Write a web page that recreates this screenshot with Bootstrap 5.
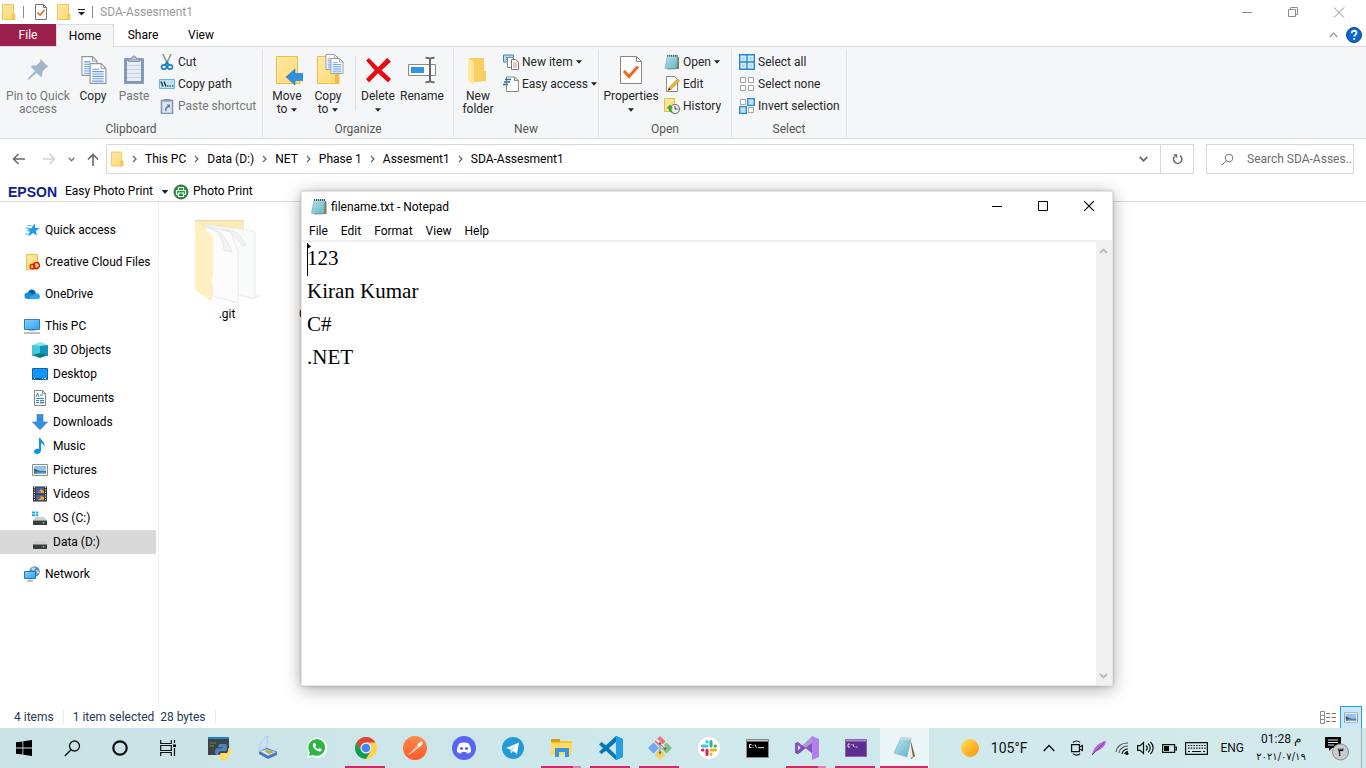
<!DOCTYPE html>
<html lang="en">
<head>
<meta charset="utf-8">
<meta name="viewport" content="width=device-width, initial-scale=1">
<title>SDA-Assesment1</title>
<link href="https://cdn.jsdelivr.net/npm/bootstrap@5.3.0/dist/css/bootstrap.min.css" rel="stylesheet">
<script src="https://cdn.jsdelivr.net/npm/bootstrap@5.3.0/dist/js/bootstrap.bundle.min.js" defer></script>
<style>
  :root { --line: #dadbdc; --ribbon: #f5f6f7; --wine: #9a1f4c; --pink: #cf2a64; }
  body { font-family: Roboto, "Open Sans", sans-serif; font-size: 12px; line-height: 13px; color: #000; background: #fff; }
  svg { display: block; flex: none; }
  button { border: 0; background: none; padding: 0; color: inherit; }
  a { color: inherit; text-decoration: none; }
  .titlebar { height: 24px; padding-left: 2px; gap: 7px; }
  .titlebar .sep { width: 1px; height: 12px; background: #8a8a8a; }
  .titlebar .quick { gap: 10px; padding-left: 4px; }
  .win-ctl { width: 46px; height: 20px; }
  .win-title { color: #999; }
  .tabs { height: 23px; border-bottom: 1px solid var(--line); }
  .tabs .tab-btn { height: 23px; width: 58px; }
  .tabs .file { background: var(--wine); color: #fff; height: 22px; width: 56px; }
  .tabs .home { border: 1px solid var(--line); border-bottom: 0; background: var(--ribbon); }
  .ribbon { background: var(--ribbon); border-bottom: 1px solid var(--line); height: 92px; color: #262626; }
  .group { border-right: 1px solid #e2e3e4; height: 88px; margin-top: 2px; display: flex; flex-direction: column; flex: none; }
  .group > .items { display: flex; flex: none; height: 73px; padding-left: 2px; }
  .group > .caption { text-align: center; color: #555; line-height: 14px; }
  .g-clipboard { width: 263px; }
  .g-organize { width: 191px; }
  .g-new { width: 145px; }
  .g-open { width: 133px; }
  .g-select { width: 115px; }
  .big { display: flex; flex-direction: column; align-items: center; padding-top: 5px; flex: none; line-height: 13px; white-space: nowrap; width: 44px; }
  .big.w-xl { width: 72px; }
  .big.w-lg { width: 60px; }
  .big.w-sm { width: 38px; }
  .big svg.pic { margin-bottom: 4px; }
  .big .ln { display: flex; align-items: center; gap: 4px; height: 13px; }
  .dim { color: #777; }
  .stack { display: flex; flex-direction: column; padding: 2px 0 0 3px; }
  .stack button { display: flex; align-items: center; gap: 3px; height: 22px; white-space: nowrap; }
  .v-sep { width: 1px; background: #dcdddf; margin: 7px 0 10px 8px; height: 55px; }
  .address { height: 39px; padding: 5px 12px 0 12px; }
  .nav-btns { width: 94px; height: 30px; }
  .addr-box { border: 1px solid #d9d9d9; height: 30px; }
  .crumbs { gap: 8px; padding-left: 4px; }
  .crumbs a, .crumbs svg { flex: none; }
  .refresh { width: 33px; height: 28px; border-left: 1px solid #d9d9d9; }
  .search-box { width: 148px; height: 30px; border: 1px solid #d9d9d9; margin-left: 12px; padding-left: 14px; gap: 13px; }
  .search-box input { border: 0; outline: 0; background: none; padding: 0; font-size: 12px; color: #6d6d6d; width: 106px; }
  .search-box input::placeholder { color: #6d6d6d; opacity: 1; }
  .epson-bar { height: 24px; border-bottom: 1px solid #d9d9d9; padding: 4px 0 0 8px; }
  .epson { font: bold 14px/16px "Liberation Sans", Arial, sans-serif; color: #10218b; width: 49px; }
  .nav-pane { width: 159px; border-right: 1px solid #f0f0f0; padding-top: 16px; }
  .nav-pane a { display: flex; align-items: center; gap: 5px; height: 24px; width: 156px; padding-left: 24px; white-space: nowrap; }
  .nav-pane .sub { padding-left: 32px; }
  .nav-pane .picked { background: #d9d9d9; }
  .file-area { padding: 17px 0 0 25px; }
  .tile { width: 86px; margin-right: 29px; }
  .tile svg { margin: 0 auto 3px; }
  .tile .thumb { height: 89px; }
  .statusbar { height: 22px; color: #1e395b; padding-left: 14px; gap: 9px; }
  .statusbar .bar { width: 1px; height: 14px; background: #ebebeb; }
  .view-on { width: 22px; height: 23px; background: #cce8ff; border: 1px solid #26a0da; }
  .taskbar { height: 40px; background: linear-gradient(90deg, #c9e2e6, #cfe8eb 50%, #d2eaec); color: #111; }
  .app { display: flex; align-items: center; justify-content: center; position: relative; width: 49px; height: 40px; flex: none; }
  .app.sys { width: 48px; }
  .app.run::after { content: ""; position: absolute; left: 4px; right: 5px; bottom: 0; height: 2px; background: var(--pink); }
  .app.multi::after { background: linear-gradient(90deg, var(--pink) 80%, #df86a8 80%); }
  .app.current { background: #ecf6f8; }
  .app.current::after { left: 0; right: 1px; }
  .sys-end { width: 2px; }
  .tray { gap: 8px; }
  .weather { gap: 12px; }
  .temp { font-size: 14px; }
  .clock { width: 58px; line-height: 18px; text-align: center; margin-right: 6px; }
  .clock .date { font-family: "DejaVu Sans", sans-serif; font-size: 10px; }
  .peek { width: 5px; height: 40px; border-left: 1px solid #9bb4b8; }
  .notepad { position: absolute; left: 301px; top: 191px; width: 812px; height: 495px; background: #fff; border: 1px solid #e4e4e4; box-shadow: 0 3px 16px rgba(0,0,0,.35), 0 0 3px rgba(0,0,0,.2); }
  .np-title { height: 29px; padding-left: 9px; }
  .np-title .np-name { padding: 2px 0 0 4px; }
  .np-title .ctl { width: 46px; height: 28px; }
  .np-menu { height: 21px; padding: 2px 0 0 7px; gap: 13px; border-bottom: 2px solid #f0f0f0; }
  .np-text { border: 0; outline: 0; resize: none; overflow: hidden; padding: 0 5px; font: 21px/33px "Liberation Serif", "Times New Roman", serif; color: #000; }
  .np-scroll { width: 16px; background: #f0f0f0; padding: 6px 1px 6px 0; }
  .caret { position: absolute; left: 5px; top: 51px; }
</style>
</head>
<body class="vh-100 d-flex flex-column overflow-hidden position-relative">

<!-- Shared icon sprite -->
<svg width="0" height="0" class="position-absolute" aria-hidden="true">
  <defs>
    <linearGradient id="gf" x1="0" y1="0" x2="1" y2="1"><stop offset="0" stop-color="#ffe9a2"/><stop offset="1" stop-color="#ffd970"/></linearGradient>
    <linearGradient id="gs" x1="0" y1="0" x2="1" y2="1"><stop offset="0" stop-color="#ffe45c"/><stop offset="1" stop-color="#ff8f00"/></linearGradient>
    <linearGradient id="gb" x1="0" y1="0" x2="1" y2="1"><stop offset="0" stop-color="#8bd0ff"/><stop offset="1" stop-color="#2ba2f5"/></linearGradient>
    <linearGradient id="gn" x1="0" y1="0" x2="1" y2="1"><stop offset="0" stop-color="#bfe6ef"/><stop offset="1" stop-color="#5fb4c8"/></linearGradient>
    <linearGradient id="gp" x1="0" y1="0" x2="0" y2="1"><stop offset="0" stop-color="#ff8a4a"/><stop offset="1" stop-color="#ff5a2a"/></linearGradient>
    <symbol id="folder" viewBox="0 0 14 16"><path d="M.5.5h11v10h1.500v5H.5z" fill="url(#gf)" stroke="#eec75c"/><path d="M11 10.500v5M11 10.500h2" stroke="#e3b33e" fill="none"/></symbol>
    <symbol id="tri" viewBox="0 0 5 3"><path d="M0 0h5L2.500 3z" fill="#222"/></symbol>
    <symbol id="page" viewBox="0 0 18 22"><path d="M.7.7h11.600l5 5v15.600H.7z" fill="#fff" stroke="#8f9499" stroke-width="1.200"/><path d="M12.300.7v5h5" fill="none" stroke="#8f9499"/><path d="M3 6.500h7M3 9h12M3 11.500h12M3 14h12M3 16.500h12M3 19h12" stroke="#5b9df0" stroke-width="1.200"/></symbol>
    <symbol id="note" viewBox="0 0 16 17"><path d="M14 3l1.500.5V16L3 16.500z" fill="#8d7a52"/><path d="M3 2h11l-1 13.500H.5z" fill="url(#gn)" stroke="#4f9db4" stroke-width=".5"/><path d="M2.500 5.500h10M2.200 8h10M1.900 10.500h10M1.600 13h10" stroke="#86c4d2" stroke-width=".6"/><path d="M3.500 1v1.800M5.500 1v1.800M7.500 1v1.800M9.500 1v1.800M11.500 1v1.800M13.300 1v1.800" stroke="#39444a"/></symbol>
    <symbol id="chev" viewBox="0 0 5 8"><path d="M1 1l3 3-3 3" fill="none" stroke="#6a6a6a" stroke-width="1.300"/></symbol>
    <symbol id="pict" viewBox="0 0 16 12"><path d="M.5.5h15v11H.5z" fill="#fff" stroke="#8b8f93"/><path d="M2 2h12v5H2z" fill="#8fc4f4"/><path d="M2 5l4 1.500 3 .5h5v3H2z" fill="#46768a"/><path d="M2 4.500l5 2.500H2z" fill="#2e5d49"/><path d="M5 8.500h9V10H2z" fill="#7cb1cf"/></symbol>
    <symbol id="drive" viewBox="0 0 14 8"><path d="M2.500 0h9L14 3.500H0z" fill="#cfcfcf"/><path d="M0 3.500h14V8H0z" fill="#3a3d40"/><circle cx="10.500" cy="5.700" r=".9" fill="#4be04b"/></symbol>
  </defs>
</svg>

<!-- Title bar -->
<header class="titlebar d-flex align-items-center flex-shrink-0">
  <svg width="14" height="16"><use href="#folder"/></svg>
  <span class="sep"></span>
  <div class="quick d-flex align-items-center">
    <button aria-label="Properties"><svg width="12" height="16" viewBox="0 0 12 16"><path d="M.5.5h8l3 3v12H.5z" fill="#fff" stroke="#777"/><path d="M8.500.5v3h3" fill="none" stroke="#777"/><path d="M2.500 8.500L5 11l4.500-5" fill="none" stroke="#f26522" stroke-width="1.700"/></svg></button>
    <button aria-label="New folder"><svg width="14" height="16"><use href="#folder"/></svg></button>
  </div>
  <button aria-label="Customize toolbar"><svg width="7" height="7" viewBox="0 0 7 7"><path d="M0 .5h7" stroke="#222"/><path d="M0 3h7L3.500 6.500z" fill="#222"/></svg></button>
  <span class="sep"></span>
  <span class="win-title">SDA-Assesment1</span>
  <div class="ms-auto d-flex align-items-center">
    <button class="win-ctl d-flex align-items-center justify-content-center" aria-label="Minimize"><svg width="12" height="10" viewBox="0 0 12 10"><path d="M1 5.500h10" stroke="#8c8c8c"/></svg></button>
    <button class="win-ctl d-flex align-items-center justify-content-center" aria-label="Restore"><svg width="12" height="12" viewBox="0 0 12 12"><path d="M1.500 3.500h7v7h-7zM3.500 3.500v-2h7v7h-2" fill="none" stroke="#8c8c8c"/></svg></button>
    <button class="win-ctl d-flex align-items-center justify-content-center me-1" aria-label="Close"><svg width="12" height="11" viewBox="0 0 12 11"><path d="M1 .5l10 10M11 .5l-10 10" stroke="#8c8c8c"/></svg></button>
  </div>
</header>

<nav class="tabs d-flex flex-shrink-0">
  <button class="tab-btn file">File</button><button class="tab-btn home">Home</button><button class="tab-btn">Share</button><button class="tab-btn">View</button>
  <div class="ms-auto d-flex align-items-center gap-2">
    <button aria-label="Collapse ribbon"><svg width="9" height="6" viewBox="0 0 9 6"><path d="M.7 5l3.800-4 3.800 4" fill="none" stroke="#999" stroke-width="1.300"/></svg></button>
    <button aria-label="Help" class="me-1"><svg width="16" height="16" viewBox="0 0 16 16"><circle cx="8" cy="8" r="7.500" fill="#0d68c9" stroke="#0a4c96"/><path d="M5.600 6.200C5.600 3 10.500 3 10.500 6c0 1.600-2.300 1.700-2.300 3.600M8.200 11v1.700" fill="none" stroke="#fff" stroke-width="1.800"/></svg></button>
  </div>
</nav>

<!-- Ribbon -->
<section class="ribbon d-flex flex-shrink-0">
  <div class="group g-clipboard">
    <div class="items">
      <button class="big w-xl dim"><svg class="pic" width="32" height="32" viewBox="0 0 32 32"><g transform="translate(5 5)"><path d="M13.500 0l8 8-2.500.7-3.800 4.200c.6 2.200 0 4-1.300 5.200L9.600 13.700 2 20.500.8 20.800l.2-1.500 7-7.300-4.200-4.300c1.400-1.300 3.200-1.700 5.300-1l4-4z" fill="#a3b5cb"/></g></svg><span class="ln">Pin to Quick</span><span class="ln">access</span></button>
      <button class="big w-sm"><svg class="pic" width="32" height="32" viewBox="0 0 32 32"><use href="#page" x="4" y="2" width="17" height="20"/><use href="#page" x="12" y="9" width="18" height="21"/></svg><span class="ln">Copy</span></button>
      <button class="big dim"><svg class="pic" width="32" height="32" viewBox="0 0 32 32"><path d="M6.500 4.500h19v25h-19z" fill="#8497bb" stroke="#8c9dbd"/><path d="M9 7h14v20H9z" fill="#e9edf5"/><path d="M9 11.500h14M9 15.500h14M9 19.500h14M9 23.500h14" stroke="#c6d0e3"/><path d="M10.500 7.500V5h3c0-3.800 5-3.800 5 0h3v2.500z" fill="#aebbd2" stroke="#8494b2"/></svg><span class="ln">Paste</span></button>
      <div class="stack">
        <button><svg width="16" height="16" viewBox="0 0 16 16"><path d="M4 0l5 11M12 0L7 11" stroke="#8d979f" stroke-width="1.600"/><g fill="none" stroke="#1583c6" stroke-width="1.700"><ellipse cx="5" cy="13" rx="2.500" ry="2.200"/><ellipse cx="11" cy="13" rx="2.500" ry="2.200"/><path d="M6 11l2-3 2 3"/></g></svg>Cut</button>
        <button><svg width="16" height="16" viewBox="0 0 16 16"><path d="M.5 3.500h15v9H.5z" fill="#bfe1f8" stroke="#6db1dd"/><path d="M2 5.500l2 5M5 5.500l2 5M8 10h1.500M10.500 10H12M13 10h1.500" stroke="#123" stroke-width="1.200"/></svg>Copy path</button>
        <button class="dim"><svg width="16" height="16" viewBox="0 0 16 16"><path d="M2.500 2.500h11v13h-11z" fill="#dfe5f0" stroke="#7f93b5" stroke-width="1.500"/><path d="M5 3V1.500h6V3z" fill="#9aaac6" stroke="#7f93b5"/><path d="M6 13c-.5-3 1-4.500 3-5L7.500 6.500H11v4L10 9C8.500 9.500 7 10.500 7.500 13z" fill="#60779f"/></svg>Paste shortcut</button>
      </div>
    </div>
    <div class="caption">Clipboard</div>
  </div>
  <div class="group g-organize">
    <div class="items">
      <button class="big"><svg class="pic" width="32" height="32" viewBox="0 0 32 32"><path d="M5.500 2.500h21v17H29v10H5.500z" fill="url(#gf)" stroke="#e8bd4d"/><path d="M15 23l9-8v4.500h8v7h-8V31z" fill="#2e8fe0" stroke="#2277bf" stroke-width=".6"/></svg><span class="ln">Move</span><span class="ln">to<svg width="6" height="4"><use href="#tri"/></svg></span></button>
      <button class="big w-sm"><svg class="pic" width="32" height="32" viewBox="0 0 32 32"><path d="M5.500 2.500h20v17H27v10H5.500z" fill="url(#gf)" stroke="#e8bd4d"/><path d="M23 20h3.500v9.500H23z" fill="#f0bd45"/><use href="#page" x="13" y="0" width="14" height="16"/><use href="#page" x="18" y="4" width="14" height="16"/></svg><span class="ln">Copy</span><span class="ln">to<svg width="6" height="4"><use href="#tri"/></svg></span></button>
      <span class="v-sep"></span>
      <button class="big"><svg class="pic" width="32" height="32" viewBox="0 0 32 32"><path d="M4 6.500L7 4l9 9.300L25 4l4 3.500-9.300 8.700L29 25l-3 3.500-10-9.300-9 9.300L4 25l8.700-8.800z" fill="#e60b12"/></svg><span class="ln">Delete</span><span class="ln"><svg width="6" height="4"><use href="#tri"/></svg></span></button>
      <button class="big"><svg class="pic" width="32" height="32" viewBox="0 0 32 32"><path d="M2.500 10.500h27v11h-27z" fill="#fff" stroke="#8a8a8a"/><path d="M5 13h13v6H5z" fill="#2f94ea"/><path d="M19.500 3.800c3 0 4.500 0 4.500 2.200v20c0 2.200-1.500 2.200-4.500 2.200M28.500 3.800C25.500 3.800 24 3.800 24 6v20c0 2.200 1.500 2.200 4.500 2.200" fill="none" stroke="#666" stroke-width="2"/></svg><span class="ln">Rename</span></button>
    </div>
    <div class="caption">Organize</div>
  </div>
  <div class="group g-new">
    <div class="items">
      <button class="big"><svg class="pic" width="32" height="32" viewBox="0 0 32 32"><path d="M6 4h16v14l2 9-12 1z" fill="#f8ce63"/><path d="M6 4l6 4v23l-6-4z" fill="#ffe79f"/><path d="M21 17h3v10h-3z" fill="#f4cc62"/></svg><span class="ln">New</span><span class="ln">folder</span></button>
      <div class="stack">
        <button><svg width="16" height="16" viewBox="0 0 16 16"><path d="M.5 1h10v7H.5z" fill="#b5dcf5" stroke="#3c88b4"/><path d="M3 3.500h5M3 5.500h3" stroke="#3c88b4"/><path d="M4.500 3.500h6v10h-6z" fill="#fff" stroke="#888"/><path d="M8.500 5.500h4l3 2.500v7.500h-7z" fill="#fff" stroke="#777"/><path d="M10 9h4M10 11h4M10 13h4" stroke="#c99"/></svg>New item<svg width="6" height="4"><use href="#tri"/></svg></button>
        <button><svg width="16" height="16" viewBox="0 0 16 16"><path d="M3.500 1h8l4 3.500v11h-12z" fill="#fff" stroke="#888"/><path d="M11.500 1v3.500h4" fill="none" stroke="#888"/><path d="M2 3.500h6M1 6h6M0 8.500h5" stroke="#2a6f9c" stroke-width="1.300"/></svg>Easy access<svg width="6" height="4"><use href="#tri"/></svg></button>
      </div>
    </div>
    <div class="caption">New</div>
  </div>
  <div class="group g-open">
    <div class="items">
      <button class="big w-lg"><svg class="pic" width="32" height="32" viewBox="0 0 32 32"><path d="M5.500 2.500h16l5 5v22h-21z" fill="#fff" stroke="#858585"/><path d="M21.500 2.500v5h5" fill="none" stroke="#858585"/><path d="M9 17l5 5.500 9-10" fill="none" stroke="#f26522" stroke-width="3"/></svg><span class="ln">Properties</span><span class="ln"><svg width="6" height="4"><use href="#tri"/></svg></span></button>
      <div class="stack">
        <button><svg width="16" height="16"><use href="#note"/></svg>Open<svg width="6" height="4"><use href="#tri"/></svg></button>
        <button><svg width="16" height="16" viewBox="0 0 16 16"><path d="M2.500.5h8l3 3v12h-11z" fill="#fff" stroke="#888"/><path d="M4 14.500l1.200-3.300L13.500 3l2 2-8.300 8.300z" fill="#f2b63d" stroke="#b97c22" stroke-width=".6"/><path d="M4 14.500l1-2.800 1.800 1.800z" fill="#333"/></svg>Edit</button>
        <button><svg width="16" height="16" viewBox="0 0 16 16"><path d="M.5.5h10v13H.5z" fill="url(#gf)" stroke="#e3bb54"/><circle cx="11" cy="11" r="4.500" fill="#eee" stroke="#777" stroke-width="1.200"/><path d="M11 8v3h2.500" fill="none" stroke="#444"/><path d="M2.500 10.500l3.500-4 3 4H7.300c0 2 1 3.500 2.700 4-3 .8-5.500-1.500-5.500-4z" fill="#2ea836"/></svg>History</button>
      </div>
    </div>
    <div class="caption">Open</div>
  </div>
  <div class="group g-select">
    <div class="items ps-1">
      <div class="stack">
        <button><svg width="16" height="16" viewBox="0 0 16 16"><path d="M.7.7h14.600v14.600H.7zM8 .7v14.600M.7 8h14.600" fill="#d5ecfc" stroke="#2687d4" stroke-width="1.400"/><path d="M3 3h2.700v2.700H3zM10.300 3H13v2.700h-2.700zM3 10.300h2.700V13H3zM10.300 10.300H13V13h-2.700z" fill="#a9d8f8"/></svg>Select all</button>
        <button><svg width="16" height="16" viewBox="0 0 16 16"><path d="M1.500 1.500h5v5h-5zM9.500 1.500h5v5h-5zM1.500 9.500h5v5h-5zM9.500 9.500h5v5h-5z" fill="#fff" stroke="#a5a5a5"/></svg>Select none</button>
        <button><svg width="16" height="16" viewBox="0 0 16 16"><path d="M1.500 1.500h5v5h-5zM9.500 9.500h5v5h-5z" fill="#fff" stroke="#a5a5a5"/><path d="M8.700.7h6.600v6.600H8.700zM.7 8.700h6.600v6.600H.7z" fill="#b9e0fb" stroke="#2687d4" stroke-width="1.300"/></svg>Invert selection</button>
      </div>
    </div>
    <div class="caption">Select</div>
  </div>
</section>

<!-- Address row -->
<section class="address d-flex flex-shrink-0">
  <div class="nav-btns d-flex align-items-center">
    <button aria-label="Back"><svg width="14" height="12" viewBox="0 0 14 12"><path d="M13 6H2M6.500 1L1.500 6l5 5" fill="none" stroke="#666" stroke-width="1.500"/></svg></button>
    <button aria-label="Forward" class="ms-3"><svg width="14" height="12" viewBox="0 0 14 12"><path d="M1 6h11M7.500 1l5 5-5 5" fill="none" stroke="#d2d2d2" stroke-width="1.500"/></svg></button>
    <button aria-label="Recent" class="ms-2 ps-1"><svg width="7" height="5" viewBox="0 0 7 5"><path d="M.7.8l2.800 3 2.800-3" fill="none" stroke="#777" stroke-width="1.300"/></svg></button>
    <button aria-label="Up" class="ms-2 ps-1"><svg width="12" height="13" viewBox="0 0 12 13"><path d="M6 13V2M1 6.500l5-5 5 5" fill="none" stroke="#666" stroke-width="1.600"/></svg></button>
  </div>
  <div class="addr-box d-flex align-items-center flex-grow-1">
    <div class="crumbs d-flex align-items-center flex-grow-1">
      <svg width="13" height="16"><use href="#folder"/></svg>
      <svg width="5" height="8"><use href="#chev"/></svg><a href="#">This PC</a>
      <svg width="5" height="8"><use href="#chev"/></svg><a href="#">Data (D:)</a>
      <svg width="5" height="8"><use href="#chev"/></svg><a href="#">NET</a>
      <svg width="5" height="8"><use href="#chev"/></svg><a href="#">Phase 1</a>
      <svg width="5" height="8"><use href="#chev"/></svg><a href="#">Assesment1</a>
      <svg width="5" height="8"><use href="#chev"/></svg><a href="#">SDA-Assesment1</a>
    </div>
    <button class="px-2 me-1" aria-label="Previous locations"><svg width="9" height="6" viewBox="0 0 9 6"><path d="M.7.8l3.800 4 3.800-4" fill="none" stroke="#666" stroke-width="1.700"/></svg></button>
    <button class="refresh d-flex align-items-center justify-content-center" aria-label="Refresh"><svg width="11" height="12" viewBox="0 0 11 12"><path d="M8 2.700A4.200 4.200 0 1 1 2.500 3.500" fill="none" stroke="#666" stroke-width="1.500"/><path d="M1 1.300h4.200v4z" fill="#666"/></svg></button>
  </div>
  <label class="search-box d-flex align-items-center">
    <svg width="13" height="13" viewBox="0 0 13 13"><circle cx="8" cy="5" r="3.800" fill="none" stroke="#777"/><path d="M5.300 7.700L.8 12.200" stroke="#777"/></svg>
    <input type="text" placeholder="Search SDA-Asses..." aria-label="Search">
  </label>
</section>

<section class="epson-bar d-flex align-items-center flex-shrink-0">
  <span class="epson">EPSON</span>
  <button class="ms-2 d-flex align-items-center gap-2">Easy Photo Print<svg width="8" height="4"><use href="#tri" width="8" height="4"/></svg></button>
  <button class="ms-1 d-flex align-items-center gap-1"><svg width="16" height="16" viewBox="0 0 16 16"><circle cx="8" cy="8" r="7" fill="#1c9a38" stroke="#4b5a4f"/><path d="M5.500 6.500v-3h5v3M5.500 10.500h-2v-4h9v4h-2M5.500 9h5v3.500h-5z" fill="none" stroke="#fff" stroke-width="1.100"/></svg>Photo Print</button>
</section>

<!-- Explorer body -->
<main class="d-flex flex-grow-1 overflow-hidden">
  <nav class="nav-pane flex-shrink-0">
    <a href="#" class="mb-2"><svg width="16" height="16" viewBox="0 0 16 16"><path d="M10.500 1.500l.7 4.300 4.500.5-4 2.700 1.500 4.700L9 11l-4.800 3.500 1.600-5L3 6.500l4.300-.3z" fill="#1f9be8"/><path d="M3.500 3.500h4M1.500 6h4M2.500 9h3M1 12h4" stroke="#54b6f2"/></svg>Quick access</a>
    <a href="#" class="mb-2"><svg width="16" height="16" viewBox="0 0 16 16"><path d="M2.500.5h11v15h-11z" fill="url(#gf)" stroke="#eebf4e"/><g fill="none" stroke="#da1f16" stroke-width="1.500"><circle cx="8.500" cy="12.500" r="2.300"/><circle cx="12.500" cy="11.500" r="2.900"/></g></svg>Creative Cloud Files</a>
    <a href="#" class="mb-2"><svg width="16" height="16" viewBox="0 0 16 16"><path d="M4 7c.3-4.200 6.300-5 8 0l-3 3z" fill="#0364b8"/><path d="M3.500 13A3.200 3.200 0 0 1 4 6.500c2 0 3 1 5 2.500L5 13z" fill="#1490df"/><path d="M4 13l6-5c3-2 6 .3 6 2.700 0 1.300-1 2.300-2.300 2.300z" fill="#28a8ea"/></svg>OneDrive</a>
    <a href="#"><svg width="16" height="16" viewBox="0 0 16 16"><path d="M.5 1.500h15v10H.5z" fill="url(#gb)" stroke="#2e7fae"/><path d="M5 12.500h6" stroke="#9fb6c3"/><path d="M0 15h16" stroke="#8da0ae" stroke-width="1.300"/></svg>This PC</a>
    <a href="#" class="sub"><svg width="16" height="16" viewBox="0 0 16 16"><path d="M0 3l8-3 8 3-8 2z" fill="#8fe3ea"/><path d="M0 3l8 1v8l-8 2z" fill="#45c9d8"/><path d="M16 3L8 4v8l8 2z" fill="#1096bd"/><path d="M0 13l8-2 8 2-8 3z" fill="#087b88"/></svg>3D Objects</a>
    <a href="#" class="sub"><svg width="16" height="16" viewBox="0 0 16 16"><path d="M.5 2.500h15v11H.5z" fill="#1296f5" stroke="#0c64a9"/><path d="M1 12.500h14" stroke="#0b4f88"/><path d="M2 12.500h1M10 12.500h1M12 12.500h2" stroke="#fff"/></svg>Desktop</a>
    <a href="#" class="sub"><svg width="16" height="16" viewBox="0 0 16 16"><path d="M2.500.5h8l3 3v12h-11z" fill="#fff" stroke="#888"/><path d="M10.500.5v3h3" fill="none" stroke="#888"/><path d="M4 7l1.500-4L7 7M8 5h3M4 8.500h8M4 10.500h3M4 12.500h3M8 10.500h4" fill="none" stroke="#3984c6"/><path d="M8 12.500h4" stroke="#57767c" stroke-width="1.500"/></svg>Documents</a>
    <a href="#" class="sub"><svg width="16" height="16" viewBox="0 0 16 16"><path d="M5 .5h6V8h4.500L8 15.700.5 8H5z" fill="#338fe0" stroke="#2a78c0" stroke-width=".6"/></svg>Downloads</a>
    <a href="#" class="sub"><svg width="16" height="16" viewBox="0 0 16 16"><path d="M7 0h1.500c.5 3 5 4 4 8.500-.5-2-2-3-3.500-3.300V12c0 2-1.500 4-4 4S2 14.500 2 13.500C2 11.500 5 10 7 11z" fill="#0a94ee"/></svg>Music</a>
    <a href="#" class="sub"><svg width="16" height="12"><use href="#pict"/></svg>Pictures</a>
    <a href="#" class="sub"><svg width="16" height="16" viewBox="0 0 16 16"><path d="M1 .5h14v15H1z" fill="#2b2b2b"/><path d="M4 1.500h8v6H4zM4 8.500h8v6H4z" fill="#3f62a9"/><path d="M6 7l3-4 3 2v2zM6 14l3-4 3 1v3z" fill="#e3a62c"/><path d="M7 6h2M6 12h3" stroke="#cf3f2e"/><path d="M2.500 1v14M13.500 1v14" stroke="#e5e5e5" stroke-width="1.200" stroke-dasharray="1.200 1.200"/></svg>Videos</a>
    <a href="#" class="sub"><svg width="16" height="16" viewBox="0 0 16 16"><path d="M0 1.500h3v2H0zM3.700 1.500h2.600v2H3.700zM0 4.200h3v2H0zM3.700 4.200h2.600v2H3.700z" fill="#1ca9e6"/><use href="#drive" x="1" y="7" width="14" height="8"/></svg>OS (C:)</a>
    <a href="#" class="sub picked mb-2"><svg width="16" height="16" viewBox="0 0 16 16"><use href="#drive" x="1" y="7" width="14" height="8"/></svg>Data (D:)</a>
    <a href="#"><svg width="16" height="16" viewBox="0 0 16 16"><circle cx="10.500" cy="5.500" r="5.300" fill="#5c93b4"/><path d="M7 3c2-2 3-2 4-1s-1 2-2 3zM12 4c2 0 3 1 3 3l-2 1z" fill="#b3dbe6"/><path d="M.5 5.500h11v7H.5z" fill="url(#gb)" stroke="#2578b2"/><path d="M6 13v1.500M3 15h6" stroke="#8094a0"/></svg>Network</a>
  </nav>
  <div class="file-area d-flex">
    <div class="tile text-center">
      <svg width="68" height="86" viewBox="0 0 68 86"><path d="M50 79l17-3-5 4z" fill="#ebebeb"/><path d="M2 2h49v30L2 68z" fill="#fbe9b8"/><path d="M2 1.500h49" stroke="#eddcae"/><path d="M13 6l41 5 8 2v66l-20-3z" fill="#f9fafa" stroke="#ececec"/><path d="M29 10c6 1 14 7 20 17l4-1c-4-8-9-13-15-15z" fill="#f0f1f1" stroke="#e3e3e3" stroke-width=".7"/><path d="M12 7l26 6 7 19v52l-25-7z" fill="#fcfcfc" stroke="#e8e8e8"/><path d="M14 8c10 3 16 8 17 23l8 2c-3-9-8-17-14-21z" fill="#f2f3f3" stroke="#e0e0e0" stroke-width=".7"/><path d="M2 2.500l16 13 2 3v39l-1 2v23L2 71z" fill="#ffefc3"/></svg>
      .git
    </div>
    <div class="tile"><div class="thumb"></div>C</div>
  </div>
</main>

<footer class="statusbar d-flex align-items-center flex-shrink-0">
  <span>4 items</span><span class="bar"></span><span>1 item selected&nbsp; 28 bytes</span><span class="bar"></span>
  <div class="ms-auto d-flex align-items-center me-1">
    <button aria-label="Details view" class="me-1"><svg width="16" height="13" viewBox="0 0 16 13"><path d="M.5.5h4v12h-4zM.5 4.500h4M.5 8.500h4" fill="#fff" stroke="#8b8b8b"/><path d="M6 2.500h4M11.500 2.500H16M6 6.500h4M11.500 6.500H16M6 10.500h4M11.500 10.500H16" stroke="#777"/></svg></button>
    <button aria-label="Large icons view" class="view-on d-flex align-items-center justify-content-center"><svg width="14" height="11" viewBox="0 0 16 12"><use href="#pict"/></svg></button>
  </div>
</footer>

<!-- Taskbar -->
<footer class="taskbar d-flex align-items-center flex-shrink-0">
  <button class="app sys" aria-label="Start"><svg width="16" height="16" viewBox="0 0 16 16"><path d="M0 2.300l6.500-.9v6.200H0zM7.300 1.300L16 0v7.600H7.300zM0 8.400h6.500v6.200L0 13.700zM7.300 8.400H16V16l-8.700-1.200z"/></svg></button>
  <button class="app sys" aria-label="Search"><svg width="17" height="17" viewBox="0 0 17 17"><circle cx="10.500" cy="6" r="5" fill="none" stroke="#111" stroke-width="1.300"/><path d="M7 9.700L.8 16" stroke="#111" stroke-width="1.300"/></svg></button>
  <button class="app sys" aria-label="Cortana"><svg width="16" height="16" viewBox="0 0 16 16"><circle cx="8" cy="8" r="6.700" fill="none" stroke="#111" stroke-width="2.200"/></svg></button>
  <button class="app sys" aria-label="Task view"><svg width="17" height="16" viewBox="0 0 17 16"><path d="M.7 0v3.500h10.600V0M.7 16v-3.500h10.600V16M.7 5.500h10.600v5H.7zM14.500 0v3M14.500 8v8" fill="none" stroke="#111" stroke-width="1.200"/><path d="M13 4.500h3v2.500h-3z"/></svg></button>
  <span class="sys-end"></span>
  <button class="app" aria-label="Python"><svg width="24" height="24" viewBox="0 0 24 24"><path d="M1 1h21v18H1z" fill="#3e4346"/><path d="M1 1h21v2H1z" fill="#1684d4"/><path d="M3 7h6M3 10h4" stroke="#4f9653"/><path d="M13 8h5.500c1 0 1.500.8 1.500 1.800v3.400c0 1.200-.8 2-2 2h-4.500c-1.200 0-2 .8-2 2V19H10c-1.300 0-2-1.500-2-3.500s.8-3.300 2-3.300h6v-.8h-4.500V9.800C11.500 8.800 12 8 13 8z" fill="#4a86bd"/><path d="M19 24h-4.500c-1 0-1.800-.7-1.800-1.700v-3.300c0-1.200.8-2 2-2h4.100c1.300 0 2.200-.9 2.200-2.100V12.500h.7c1.500 0 2.300 1.400 2.300 3.500s-.8 3.500-2 3.500h-5.500v.8h4.300v2c0 1-.8 1.700-1.800 1.700z" fill="#ffdc56"/></svg></button>
  <button class="app" aria-label="Scanner"><svg width="22" height="24" viewBox="0 0 22 24"><path d="M2 15l8-3 10 4v3l-9 4-9-5z" fill="#4d74c6"/><path d="M2 15l8-2 10 3-9 4z" fill="#d9e9f5" stroke="#4b79c4" stroke-width=".7"/><path d="M7 15l4-1 6 2-5 2z" fill="#b9ae3c"/><path d="M11 0L9.500 11 2 15.500C2 9 6 2 11 0z" fill="#cfdff5" stroke="#a9c2e6" stroke-width=".7"/></svg></button>
  <button class="app" aria-label="WhatsApp"><svg width="22" height="22" viewBox="0 0 22 22"><path d="M1 21l1.500-5.500A10 10 0 1 1 6.500 19.500z" fill="#fff"/><path d="M3 19l1-3.500A8.400 8.400 0 1 1 7 18z" fill="#2cb742"/><path d="M8 6c-3 2 0 5.500 2 7 2 1.500 4.500 2 5.500.5.700-1.200-.3-1.700-2-2.500l-1.300 1.300C10.500 11.500 9.700 10.500 9.200 9.500l1-1.200C9.700 6.500 9 5.500 8 6z" fill="#fff"/></svg></button>
  <button class="app run" aria-label="Chrome"><svg width="22" height="22" viewBox="0 0 22 22"><circle cx="11" cy="11" r="11" fill="#ffd149"/><path d="M1.500 5.500A11 11 0 0 1 20.500 5.500H11L6.200 13.700z" fill="#db4437"/><path d="M1.500 5.500A11 11 0 0 0 11 22l4.800-8.300H6.200z" fill="#0f9d58"/><circle cx="11" cy="11" r="5.500" fill="#f1f1f1"/><circle cx="11" cy="11" r="4.300" fill="#4285f4"/></svg></button>
  <button class="app" aria-label="Postman"><svg width="24" height="24" viewBox="0 0 24 24"><circle cx="12" cy="12" r="12" fill="url(#gp)"/><path d="M5 18.500l9-8.500 1.500 1.500-7.500 6zM14 9.500C16 6 18.500 4.500 19.500 6s-1 4-4 5.500z" fill="#fff"/><path d="M7 17l8-7" stroke="#ff743c" stroke-width=".8"/></svg></button>
  <button class="app" aria-label="Discord"><svg width="24" height="24" viewBox="0 0 24 24"><circle cx="12" cy="12" r="12" fill="#5865f2"/><path d="M8 7c2-.7 6-.7 8 0 2 2 3.500 6 3 9-2 1.500-3 1.500-4 1.500l-.8-1.500H9.800L9 17.500c-1 0-2 0-4-1.500-.5-3 1-7 3-9z" fill="#fff"/><circle cx="9.500" cy="12.500" r="1.600" fill="#5865f2"/><circle cx="14.500" cy="12.500" r="1.600" fill="#5865f2"/></svg></button>
  <button class="app" aria-label="Telegram"><svg width="22" height="22" viewBox="0 0 22 22"><circle cx="11" cy="11" r="11" fill="#249bd7"/><path d="M4 11L17 5.500 15 17l-4-3-2 2.500-.5-4z" fill="#fff"/><path d="M8.500 12.500L14 8l-4 5.500-1 3z" fill="#b8d9ea"/></svg></button>
  <button class="app run multi" aria-label="File Explorer"><svg width="22" height="20" viewBox="0 0 22 20"><path d="M0 1h8l2 2h11v14H0z" fill="#f7c52b"/><path d="M0 1h9v3H0z" fill="#d99c12"/><path d="M0 5h21v12H0z" fill="#ffda62"/><path d="M4 19v-9h14v9h-4v-5H8v5z" fill="#3797da"/></svg></button>
  <button class="app run" aria-label="Visual Studio Code"><svg width="24" height="24" viewBox="0 0 24 24"><path d="M17 0l7 3v18l-7 3L0 8.500 2.500 6 6 8.500 17 19V6L6 15.500 2.500 18 0 15.800z" fill="#0877b8"/><path d="M17 0l7 3v18l-7 3z" fill="#25a0e8"/></svg></button>
  <button class="app run" aria-label="Git Bash"><svg width="24" height="24" viewBox="0 0 24 24"><g stroke-linejoin="round" stroke-width="1.500"><path d="M7.500 5.500L12 1l4.500 4.500L12 10z" fill="#ef7075" stroke="#ef7075"/><path d="M1 12l4.500-4.500L10 12l-4.500 4.500z" fill="#72a5f5" stroke="#72a5f5"/><path d="M14 12l4.500-4.500L23 12l-4.500 4.500z" fill="#80c080" stroke="#80c080"/><path d="M7.500 18.500L12 14l4.500 4.500L12 23z" fill="#f0d35a" stroke="#f0d35a"/></g><path d="M8.500 3.500L12 7v10M12 7.500l5 4.500" fill="none" stroke="#e8eff0" stroke-width="2.400"/><path d="M12 8v8.500M12.500 8.500l4 3.500" fill="none" stroke="#777" stroke-width="1"/><circle cx="12" cy="7.500" r="1.300" fill="#666"/><circle cx="12" cy="16.500" r="1.300" fill="#666"/><circle cx="17" cy="12.500" r="1.300" fill="#666"/></svg></button>
  <button class="app" aria-label="Slack"><svg width="24" height="24" viewBox="0 0 24 24"><circle cx="12" cy="12" r="11.500" fill="#fff" stroke="#ddd"/><g stroke-width="3" stroke-linecap="round"><path d="M10 5.500v.5M5.500 10H10" stroke="#36c5f0"/><path d="M14 5.500V10M18.500 10h-.5" stroke="#2eb67d"/><path d="M14 14h4.500M14 18.500v-.5" stroke="#ecb22e"/><path d="M10 14v4.500M5.500 14h.5" stroke="#e01e5a"/></g></svg></button>
  <button class="app" aria-label="Command Prompt"><svg width="23" height="19" viewBox="0 0 23 19"><path d="M.5.5h22v18H.5z" fill="#000" stroke="#888"/><path d="M1 1h21v1.500H1z" fill="#ccc"/><path d="M5.500 5.500H3.500v3h2M7 6v.8M7 8v.8M9 5.500l1.500 3.300M12 8.700h6" fill="none" stroke="#eee"/></svg></button>
  <button class="app run multi" aria-label="Visual Studio"><svg width="24" height="24" viewBox="0 0 24 24"><path d="M0 7l3-1 15 12V6L3 18l-3-1zM3 9v6l3-3z" fill="#8753be" fill-rule="evenodd"/><path d="M17 0l7 3v18l-7 3z" fill="#b27df0"/><path d="M17 0v7L5 17l-2 1-3-1z" fill="#7a3dae" opacity=".45"/></svg></button>
  <button class="app run" aria-label="Developer Prompt"><svg width="22" height="18" viewBox="0 0 22 18"><path d="M.5.5h21v17H.5z" fill="#5c2d91" stroke="#8a67ad"/><path d="M1 1h20v1.500H1z" fill="#a48cc0"/><path d="M5 5H3v3h2M6.500 5.500v.7M8 5l1 3M10.500 8h2" fill="none" stroke="#ddd"/></svg></button>
  <button class="app run current" aria-label="Notepad"><svg width="24" height="24" viewBox="0 0 24 24"><path d="M17 2l5 18-4 3z" fill="#75613d"/><path d="M17 3l3 18-3 1z" fill="#f1ead7"/><path d="M8 2h10l-4 19-13-4z" fill="url(#gn)" stroke="#6bb0c2" stroke-width=".6"/><path d="M8 1.500h10l1 2.500-12-.5z" fill="#cfd8da"/></svg></button>

  <div class="tray d-flex align-items-center ms-auto">
    <button class="weather d-flex align-items-center"><svg width="18" height="18" viewBox="0 0 18 18"><circle cx="9" cy="9" r="9" fill="url(#gs)"/></svg><span class="temp">105°F</span></button>
    <button class="px-2" aria-label="Show hidden icons"><svg width="12" height="8" viewBox="0 0 12 8"><path d="M.7 7L6 1.500 11.300 7" fill="none" stroke="#111" stroke-width="1.400"/></svg></button>
    <button aria-label="Meet Now"><svg width="12" height="16" viewBox="0 0 12 16"><path d="M.6 4.600h7.800v7H.6zM8.400 7l3-1.500v5l-3-1.500M2 2.500c2-2 5.500-2 7 0M2 13.700c2 2 5.500 2 7 0" fill="none" stroke="#111" stroke-width="1.200"/></svg></button>
    <button aria-label="Pen"><svg width="16" height="16" viewBox="0 0 16 16"><path d="M1 15C2 8 8 2 15 1c0 5-6 9-11 11z" fill="#b565cf"/><path d="M1 15L13 3" stroke="#7d3a9e"/></svg></button>
    <button aria-label="Wi-Fi"><svg width="14" height="14" viewBox="0 0 14 14"><g fill="none" stroke="#555" stroke-width="1.100"><path d="M1 11C1.500 6 6 1.800 13 2"/><path d="M4 12C4.500 8 8 5 13 5"/></g><path d="M7 13c.5-3 3-5 6-5M9.500 13c.5-1.500 2-2.500 3.500-2.500" fill="none" stroke="#111" stroke-width="1.200"/><circle cx="12" cy="12.500" r="1.500"/></svg></button>
    <button aria-label="Volume"><svg width="17" height="14" viewBox="0 0 17 14"><path d="M.6 4.600h2.500L6.500 1.500v11L3.100 9.400H.6zM9 4.500c1.500 1.500 1.500 3.500 0 5M11.200 2.700c2.700 2.600 2.700 6 0 8.600M13.500 1c3.500 3.500 3.500 8.500 0 12" fill="none" stroke="#111" stroke-width="1.200"/></svg></button>
    <button aria-label="Battery"><svg width="15" height="9" viewBox="0 0 15 9"><path d="M.6.6h12v7.800H.6zM12.600 3h1.800v3h-1.800" fill="none" stroke="#111" stroke-width="1.200"/><path d="M2 2h5v5H2z"/></svg></button>
    <button aria-label="Touch keyboard"><svg width="23" height="13" viewBox="0 0 23 13"><path d="M.6.6h21.800v11.800H.6z" fill="none" stroke="#111" stroke-width="1.200"/><path d="M3 3.500h18M3 6.200h18" stroke="#111" stroke-width="1.200" stroke-dasharray="1.500 1.200"/><path d="M3 9.500h2M7 9.500h9M18 9.500h2" stroke="#111"/></svg></button>
    <button class="ms-1">ENG</button>
    <button class="clock"><span class="d-block">01:28 م</span><span class="date d-block"><bdo dir="ltr">٢٠٢١/٠٧/١٩</bdo></span></button>
    <button aria-label="Notifications" class="me-1"><svg width="25" height="26" viewBox="0 0 25 26"><path d="M1 2h16v11H8l-3 3v-3H1z"/><path d="M4 5h10M4 7.500h10M4 10h6" stroke="#d2eaec"/><circle cx="16.500" cy="17" r="8" fill="#c8ccce" stroke="#888"/><text x="16.500" y="21" font-size="12" text-anchor="middle" font-family="DejaVu Sans">٣</text></svg></button>
    <span class="peek"></span>
  </div>
</footer>

<!-- Notepad window lying over the explorer -->
<section class="notepad d-flex flex-column">
  <div class="np-title d-flex align-items-center flex-shrink-0">
    <svg width="16" height="17"><use href="#note"/></svg><span class="np-name">filename.txt - Notepad</span>
    <div class="ms-auto d-flex align-self-start">
      <button class="ctl d-flex align-items-center justify-content-center" aria-label="Minimize"><svg width="10" height="10" viewBox="0 0 10 10"><path d="M0 5.500h10" stroke="#000"/></svg></button>
      <button class="ctl d-flex align-items-center justify-content-center" aria-label="Maximize"><svg width="10" height="10" viewBox="0 0 10 10"><path d="M.5.5h9v9h-9z" fill="none" stroke="#000"/></svg></button>
      <button class="ctl d-flex align-items-center justify-content-center" aria-label="Close"><svg width="10" height="10" viewBox="0 0 10 10"><path d="M0 0l10 10M10 0L0 10" stroke="#000" stroke-width="1.200"/></svg></button>
    </div>
  </div>
  <div class="np-menu d-flex align-items-center flex-shrink-0"><button>File</button><button>Edit</button><button>Format</button><button>View</button><button>Help</button></div>
  <div class="d-flex flex-grow-1">
    <textarea class="np-text flex-grow-1" aria-label="Document text" spellcheck="false">123
Kiran Kumar
C#
.NET</textarea>
    <div class="np-scroll d-flex flex-column align-items-center justify-content-between">
      <svg width="9" height="6" viewBox="0 0 9 6"><path d="M1 5l3.500-3.500L8 5" fill="none" stroke="#b8b8b8" stroke-width="1.800"/></svg>
      <svg width="9" height="6" viewBox="0 0 9 6"><path d="M1 1l3.500 3.500L8 1" fill="none" stroke="#b8b8b8" stroke-width="1.800"/></svg>
    </div>
  </div>
  <svg class="caret" width="4" height="33" viewBox="0 0 4 33"><path d="M.5 0v33" stroke="#000"/><path d="M0 0l4 3.500L0 6z"/></svg>
</section>
</body>
</html>
